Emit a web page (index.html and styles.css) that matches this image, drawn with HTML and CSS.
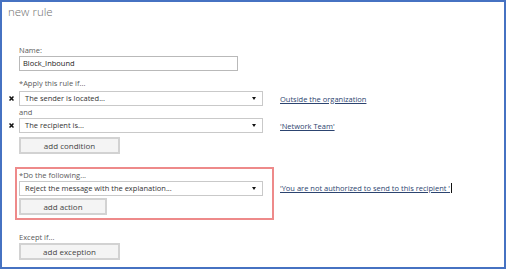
FILE: index.html
```html
<!DOCTYPE html>
<html lang="en">
<head>
    <meta charset="UTF-8">
    <title>new rule</title>
    <link rel="stylesheet" href="styles.css">
</head>
<body>
    <div class="frame">
        <h1 class="title">new rule</h1>

        <div class="form">
            <label class="field-label name-label">Name:</label>
            <div class="text-input">Block_Inbound</div>

            <label class="field-label apply-label">*Apply this rule if...</label>
            <div class="cond-row">
                <span class="remove">
                    <svg width="5" height="5" viewBox="0 0 5 5"><path d="M0.5 0.5L4.5 4.5M4.5 0.5L0.5 4.5" stroke="#111" stroke-width="1.5"/></svg>
                </span>
                <div class="select">The sender is located...<span class="caret"></span></div>
                <a class="value-link" href="#">Outside the organization</a>
            </div>

            <label class="field-label and-label">and</label>
            <div class="cond-row">
                <span class="remove">
                    <svg width="5" height="5" viewBox="0 0 5 5"><path d="M0.5 0.5L4.5 4.5M4.5 0.5L0.5 4.5" stroke="#111" stroke-width="1.5"/></svg>
                </span>
                <div class="select">The recipient is...<span class="caret"></span></div>
                <a class="value-link" href="#">'Network Team'</a>
            </div>

            <button class="btn btn-wide cond-btn">add condition</button>

            <div class="action-row">
                <div class="action-box">
                    <label class="field-label do-label">*Do the following...</label>
                    <div class="select">Reject the message with the explanation...<span class="caret"></span></div>
                    <button class="btn btn-narrow action-btn">add action</button>
                </div>
                <a class="value-link action-link" href="#">'You are not authorized to send to this recipient '</a><span class="text-cursor"></span>
            </div>

            <label class="field-label except-label">Except if...</label>
            <button class="btn btn-wide">add exception</button>
        </div>
    </div>
</body>
</html>
```

FILE: styles.css
```css
body {
    margin: 0;
    font-family: "Open Sans", "Noto Sans", sans-serif;
    background: #ffffff;
}

.frame {
    width: 506px;
    height: 269px;
    box-sizing: border-box;
    border: 2px solid #4672c2;
    background: #ffffff;
}

.title {
    margin: 2px 0 0 6px;
    font-size: 11.5px;
    font-weight: 300;
    line-height: 16px;
    color: #707070;
}

.form {
    padding-left: 17px;
}

.field-label {
    display: block;
    font-size: 7.5px;
    line-height: 10px;
    color: #5a5a5a;
}

.name-label {
    margin-top: 25px;
}

.text-input {
    width: 219px;
    height: 15px;
    box-sizing: border-box;
    margin-top: 1px;
    padding-left: 3px;
    border: 1px solid #b9b9b9;
    font-size: 7.5px;
    line-height: 13px;
    color: #222;
}

.apply-label {
    margin-top: 7px;
}

.cond-row {
    display: flex;
    align-items: center;
    margin-left: -10px;
    margin-top: 3px;
}

.remove {
    width: 10px;
    display: flex;
    align-items: center;
}

.select {
    position: relative;
    width: 244px;
    height: 15px;
    box-sizing: border-box;
    padding-left: 5px;
    border: 1px solid #c9c9c9;
    font-size: 7.5px;
    line-height: 13px;
    color: #333;
    flex-shrink: 0;
}

.caret {
    position: absolute;
    right: 6px;
    top: 5px;
    border-left: 2.5px solid transparent;
    border-right: 2.5px solid transparent;
    border-top: 3px solid #111;
}

.value-link {
    margin-left: 17px;
    font-size: 7.5px;
    line-height: 10px;
    color: #2c4470;
    text-decoration: underline;
}

.and-label {
    margin-top: 1px;
}

.cond-row + .and-label + .cond-row {
    margin-top: 1px;
}

.btn {
    display: block;
    height: 17px;
    padding: 0;
    box-sizing: border-box;
    background: #f4f4f4;
    border: 2px solid #d2d2d2;
    font-family: inherit;
    font-size: 8px;
    color: #444;
}

.btn-wide {
    width: 101px;
}

.btn-narrow {
    width: 88px;
}

.cond-btn {
    margin-top: 4px;
}

.action-row {
    display: flex;
    align-items: flex-start;
    margin-top: 13px;
    margin-left: -4px;
}

.action-box {
    width: 259px;
    box-sizing: border-box;
    padding: 1px 9px 3px 2px;
    border: 2px solid #ee8a8a;
}

.do-label {
    margin-bottom: 1px;
}

.action-btn {
    margin-top: 2px;
}

.action-link {
    margin-left: 6px;
    margin-top: 16px;
}

.text-cursor {
    width: 1px;
    height: 10px;
    margin-top: 16px;
    margin-left: 1px;
    background: #111;
}

.except-label {
    margin-top: 12px;
    margin-bottom: 1px;
}
```
